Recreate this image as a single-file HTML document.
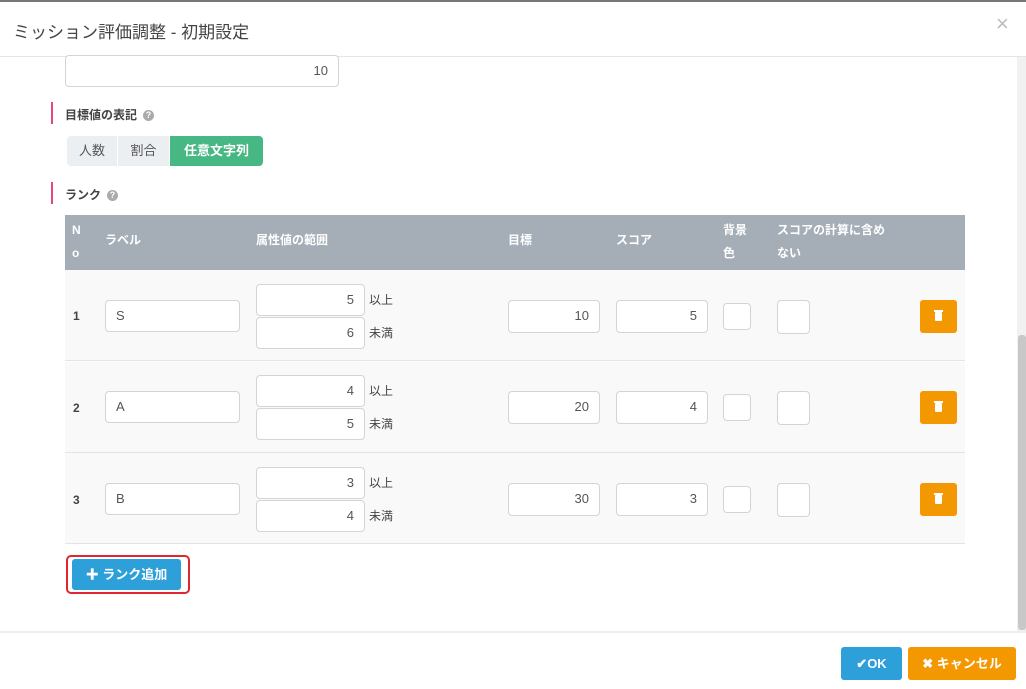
<!DOCTYPE html>
<html><head><meta charset="utf-8"><style>
*{box-sizing:border-box;margin:0;padding:0}
body{width:1026px;height:689px;overflow:hidden;background:#fff;font-family:"Liberation Sans","Noto Sans CJK JP",sans-serif;color:#333;position:relative}
.a{position:absolute}
.inp{position:absolute;background:#fff;border:1px solid #d4d4d4;border-radius:4px;font-size:13px;color:#555;line-height:30px;padding:0 10px}
.r{text-align:right}
.bar{position:absolute;left:51px;width:2px;background:#e8457a}
.lbl{position:absolute;left:65px;font-size:12px;font-weight:bold;color:#444}
.q{display:inline-block;width:11px;height:11px;border-radius:50%;background:#aaa;color:#fff;font-size:9px;line-height:11px;text-align:center;margin-left:6px;vertical-align:1px}
.th{position:absolute;color:#fff;font-size:12px;font-weight:bold;line-height:23px}
.row{position:absolute;left:65px;width:900px;height:91px;background:#f9f9f9;border-bottom:1px solid #e4e4e4}
.no{position:absolute;left:8px;font-size:12px;font-weight:bold;color:#444}
.unit{position:absolute;font-size:12px;color:#444}
.trash{position:absolute;width:37px;height:33px;background:#f39800;border-radius:3px}
.trash:after{content:"";position:absolute;left:15px;top:12px;width:7px;height:9px;background:#fff;border-radius:1px}
.trash:before{content:"";position:absolute;left:14px;top:10px;width:9px;height:2px;background:#fff}
</style></head><body>
<div class="a" style="left:0;top:0;width:1026px;height:2px;background:#777"></div>
<div class="a" style="left:13px;top:18px;font-size:17px;color:#444">ミッション評価調整 - 初期設定</div>
<div class="a" style="left:996px;top:11px;font-size:22px;color:#bbb">×</div>
<div class="a" style="left:0;top:56px;width:1026px;height:1px;background:#e5e5e5"></div>
<div class="a" style="left:1017px;top:57px;width:9px;height:575px;background:#f1f1f1"></div>
<div class="a" style="left:1018px;top:335px;width:8px;height:295px;background:#c8c8c8;border-radius:3px"></div>

<div class="inp r" style="left:65px;top:55px;width:274px;height:32px">10</div>

<div class="bar" style="top:102px;height:22px"></div>
<div class="lbl" style="top:106px">目標値の表記<span class="q">?</span></div>
<div class="a" style="left:67px;top:136px;width:50px;height:30px;background:#eceff1;border-radius:4px 0 0 4px;font-size:13px;color:#555;text-align:center;line-height:30px">人数</div>
<div class="a" style="left:118px;top:136px;width:51px;height:30px;background:#eceff1;font-size:13px;color:#555;text-align:center;line-height:30px">割合</div>
<div class="a" style="left:170px;top:136px;width:93px;height:30px;background:#47b884;border-radius:0 4px 4px 0;font-size:13px;color:#fff;font-weight:bold;text-align:center;line-height:30px">任意文字列</div>

<div class="bar" style="top:182px;height:22px"></div>
<div class="lbl" style="top:186px">ランク<span class="q">?</span></div>

<div class="a" style="left:65px;top:215px;width:900px;height:55px;background:#a5adb6"></div>
<div class="th" style="left:72px;top:219px">N<br>o</div>
<div class="th" style="left:105px;top:229px">ラベル</div>
<div class="th" style="left:256px;top:229px">属性値の範囲</div>
<div class="th" style="left:508px;top:229px">目標</div>
<div class="th" style="left:616px;top:229px">スコア</div>
<div class="th" style="left:723px;top:219px">背景<br>色</div>
<div class="th" style="left:777px;top:219px">スコアの計算に含め<br>ない</div>

<div class="row" style="top:270px"></div>
<div class="row" style="top:362px"></div>
<div class="row" style="top:453px"></div>

<div class="no a" style="left:73px;top:309px">1</div>
<div class="inp" style="left:105px;top:300px;width:135px;height:32px">S</div>
<div class="inp r" style="left:256px;top:284px;width:109px;height:32px">5</div>
<div class="inp r" style="left:256px;top:317px;width:109px;height:32px">6</div>
<div class="unit" style="left:369px;top:291px">以上</div>
<div class="unit" style="left:369px;top:324px">未満</div>
<div class="inp r" style="left:508px;top:300px;width:92px;height:33px">10</div>
<div class="inp r" style="left:616px;top:300px;width:92px;height:33px">5</div>
<div class="inp" style="left:723px;top:303px;width:28px;height:27px"></div>
<div class="inp" style="left:777px;top:300px;width:33px;height:34px"></div>
<div class="trash" style="left:920px;top:300px"></div>

<div class="no a" style="left:73px;top:401px">2</div>
<div class="inp" style="left:105px;top:391px;width:135px;height:32px">A</div>
<div class="inp r" style="left:256px;top:375px;width:109px;height:32px">4</div>
<div class="inp r" style="left:256px;top:408px;width:109px;height:32px">5</div>
<div class="unit" style="left:369px;top:382px">以上</div>
<div class="unit" style="left:369px;top:415px">未満</div>
<div class="inp r" style="left:508px;top:391px;width:92px;height:33px">20</div>
<div class="inp r" style="left:616px;top:391px;width:92px;height:33px">4</div>
<div class="inp" style="left:723px;top:394px;width:28px;height:27px"></div>
<div class="inp" style="left:777px;top:391px;width:33px;height:34px"></div>
<div class="trash" style="left:920px;top:391px"></div>

<div class="no a" style="left:73px;top:493px">3</div>
<div class="inp" style="left:105px;top:483px;width:135px;height:32px">B</div>
<div class="inp r" style="left:256px;top:467px;width:109px;height:32px">3</div>
<div class="inp r" style="left:256px;top:500px;width:109px;height:32px">4</div>
<div class="unit" style="left:369px;top:474px">以上</div>
<div class="unit" style="left:369px;top:507px">未満</div>
<div class="inp r" style="left:508px;top:483px;width:92px;height:33px">30</div>
<div class="inp r" style="left:616px;top:483px;width:92px;height:33px">3</div>
<div class="inp" style="left:723px;top:486px;width:28px;height:27px"></div>
<div class="inp" style="left:777px;top:483px;width:33px;height:34px"></div>
<div class="trash" style="left:920px;top:483px"></div>

<div class="a" style="left:66px;top:555px;width:124px;height:39px;border:2px solid #e0262e;border-radius:5px"></div>
<div class="a" style="left:72px;top:559px;width:109px;height:31px;background:#2d9fd9;border-radius:3px;color:#fff;font-size:13px;font-weight:bold;text-align:center;line-height:31px">✚ ランク追加</div>

<div class="a" style="left:0;top:631px;width:1026px;height:2px;background:#eee"></div>
<div class="a" style="left:841px;top:647px;width:61px;height:33px;background:#2d9fd9;border-radius:3px;color:#fff;font-size:13px;font-weight:bold;text-align:center;line-height:33px">✔OK</div>
<div class="a" style="left:908px;top:647px;width:108px;height:33px;background:#f39800;border-radius:3px;color:#fff;font-size:13px;font-weight:bold;text-align:center;line-height:33px">✖ キャンセル</div>
</body></html>
